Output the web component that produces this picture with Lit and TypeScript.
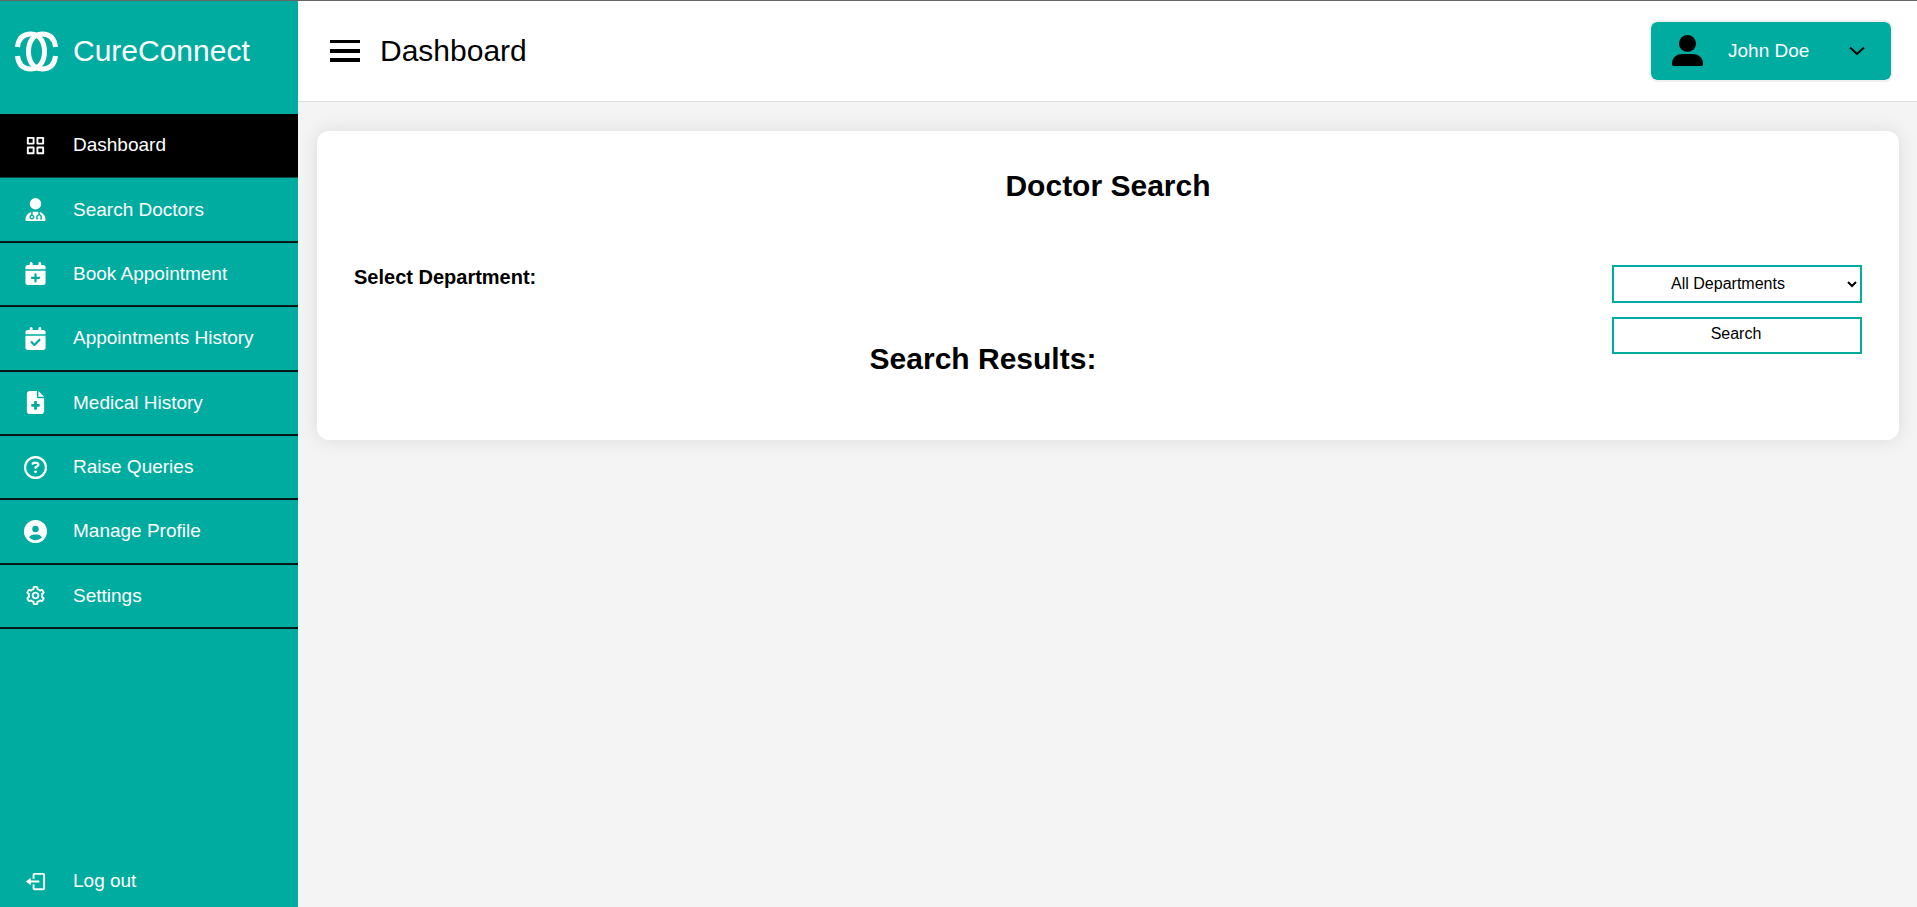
import { LitElement, html, css, svg } from "lit";
import { customElement, property, state } from "lit/decorators.js";
import { classMap } from "lit/directives/class-map.js";

const CALENDAR =
  "M96 32V64H48C21.5 64 0 85.5 0 112v48H448V112c0-26.5-21.5-48-48-48H352V32c0-17.7-14.3-32-32-32s-32 14.3-32 32V64H160V32c0-17.7-14.3-32-32-32S96 14.3 96 32z";

const ICONS: Record<string, { box: string; paths: string[] }> = {
  grid: {
    box: "0 0 24 24",
    paths: [
      "M10 3H4a1 1 0 0 0-1 1v6a1 1 0 0 0 1 1h6a1 1 0 0 0 1-1V4a1 1 0 0 0-1-1zM9 9H5V5h4v4zm11-6h-6a1 1 0 0 0-1 1v6a1 1 0 0 0 1 1h6a1 1 0 0 0 1-1V4a1 1 0 0 0-1-1zm-1 6h-4V5h4v4zm-9 4H4a1 1 0 0 0-1 1v6a1 1 0 0 0 1 1h6a1 1 0 0 0 1-1v-6a1 1 0 0 0-1-1zm-1 6H5v-4h4v4zm11-6h-6a1 1 0 0 0-1 1v6a1 1 0 0 0 1 1h6a1 1 0 0 0 1-1v-6a1 1 0 0 0-1-1zm-1 6h-4v-4h4v4z",
    ],
  },
  doctor: {
    box: "0 0 448 512",
    paths: [
      "M224 256a128 128 0 1 0 0-256 128 128 0 1 0 0 256zm-96 55.2C54 332.9 0 401.3 0 482.3C0 498.7 13.3 512 29.7 512H418.3c16.4 0 29.7-13.3 29.7-29.7c0-81-54-149.4-128-171.1V362c27.6 7.1 48 32.2 48 62v40c0 8.8-7.2 16-16 16H336c-8.8 0-16-7.2-16-16s7.2-16 16-16V424c0-17.7-14.3-32-32-32s-32 14.3-32 32v24c8.8 0 16 7.2 16 16s-7.2 16-16 16H256c-8.8 0-16-7.2-16-16V424c0-29.8 20.4-54.9 48-62V304.9c-6-.6-12.1-.9-18.3-.9H178.3c-6.2 0-12.3 .3-18.3 .9v65.4c23.1 6.9 40 28.3 40 53.7c0 30.9-25.1 56-56 56s-56-25.1-56-56c0-25.4 16.9-46.8 40-53.7V311.2zM144 448a24 24 0 1 0 0-48 24 24 0 1 0 0 48z",
    ],
  },
  calendarPlus: {
    box: "0 0 448 512",
    paths: [
      CALENDAR,
      "M448 192H0V464c0 26.5 21.5 48 48 48H400c26.5 0 48-21.5 48-48V192zM224 248c13.3 0 24 10.7 24 24v56h56c13.3 0 24 10.7 24 24s-10.7 24-24 24H248v56c0 13.3-10.7 24-24 24s-24-10.7-24-24V376H144c-13.3 0-24-10.7-24-24s10.7-24 24-24h56V272c0-13.3 10.7-24 24-24z",
    ],
  },
  calendarCheck: {
    box: "0 0 448 512",
    paths: [
      CALENDAR,
      "M448 192H0V464c0 26.5 21.5 48 48 48H400c26.5 0 48-21.5 48-48V192zM329 305L217 417c-9.4 9.4-24.6 9.4-33.9 0l-64-64c-9.4-9.4-9.4-24.6 0-33.9s24.6-9.4 33.9 0l47 47 95-95c9.4-9.4 24.6-9.4 33.9 0s9.4 24.6 0 33.9z",
    ],
  },
  fileMedical: {
    box: "0 0 384 512",
    paths: [
      "M64 0C28.7 0 0 28.7 0 64V448c0 35.3 28.7 64 64 64H320c35.3 0 64-28.7 64-64V160H256c-17.7 0-32-14.3-32-32V0H64zM256 0V128H384L256 0zM160 240c0-8.8 7.2-16 16-16h32c8.8 0 16 7.2 16 16v48h48c8.8 0 16 7.2 16 16v32c0 8.8-7.2 16-16 16H224v48c0 8.8-7.2 16-16 16H176c-8.8 0-16-7.2-16-16V352H112c-8.8 0-16-7.2-16-16V304c0-8.8 7.2-16 16-16h48V240z",
    ],
  },
  question: {
    box: "0 0 512 512",
    paths: [
      "M464 256A208 208 0 1 0 48 256a208 208 0 1 0 416 0zM0 256a256 256 0 1 1 512 0A256 256 0 1 1 0 256zm169.8-90.7c7.9-22.3 29.1-37.3 52.8-37.3h58.3c34.9 0 63.1 28.3 63.1 63.1c0 22.6-12.1 43.5-31.7 54.8L280 264.4c-.2 13-10.9 23.6-24 23.6c-13.3 0-24-10.7-24-24V250.5c0-8.6 4.6-16.5 12.1-20.8l44.3-25.4c4.7-2.7 7.6-7.7 7.6-13.1c0-8.4-6.8-15.1-15.1-15.1H222.6c-3.4 0-6.4 2.1-7.5 5.3l-.4 1.2c-4.4 12.5-18.2 19-30.6 14.6s-19-18.2-14.6-30.6l.4-1.2zM224 352a32 32 0 1 1 64 0 32 32 0 1 1 -64 0z",
    ],
  },
  userCircle: {
    box: "0 0 512 512",
    paths: [
      "M399 384.2C376.9 345.8 335.4 320 288 320H224c-47.4 0-88.9 25.8-111 64.2c35.2 39.2 86.2 63.8 143 63.8s107.8-24.7 143-63.8zM0 256a256 256 0 1 1 512 0A256 256 0 1 1 0 256zm256 16a72 72 0 1 0 0-144 72 72 0 1 0 0 144z",
    ],
  },
  cog: {
    box: "0 0 24 24",
    paths: [
      "M12 16c2.206 0 4-1.794 4-4s-1.794-4-4-4-4 1.794-4 4 1.794 4 4 4zm0-6c1.084 0 2 .916 2 2s-.916 2-2 2-2-.916-2-2 .916-2 2-2z",
      "m2.845 16.136 1 1.73c.531.917 1.809 1.261 2.73.73l.529-.306A8.1 8.1 0 0 0 9 19.402V20c0 1.103.897 2 2 2h2c1.103 0 2-.897 2-2v-.598a8.132 8.132 0 0 0 1.896-1.111l.529.306c.923.53 2.198.188 2.731-.731l.999-1.729a2.001 2.001 0 0 0-.731-2.732l-.505-.292a7.718 7.718 0 0 0 0-2.224l.505-.292a2.002 2.002 0 0 0 .731-2.732l-.999-1.729c-.531-.92-1.808-1.265-2.731-.732l-.529.306A8.1 8.1 0 0 0 15 4.598V4c0-1.103-.897-2-2-2h-2c-1.103 0-2 .897-2 2v.598a8.132 8.132 0 0 0-1.896 1.111l-.529-.306c-.924-.531-2.2-.187-2.731.732l-.999 1.729a2.001 2.001 0 0 0 .731 2.732l.505.292a7.683 7.683 0 0 0 0 2.223l-.505.292a2.003 2.003 0 0 0-.731 2.733zm3.326-2.758A5.703 5.703 0 0 1 6 12c0-.462.058-.926.17-1.378a.999.999 0 0 0-.47-1.108l-1.123-.65.998-1.729 1.145.662a.997.997 0 0 0 1.188-.142 6.071 6.071 0 0 1 2.384-1.399A1 1 0 0 0 11 5.3V4h2v1.3a1 1 0 0 0 .708.956 6.083 6.083 0 0 1 2.384 1.399.999.999 0 0 0 1.188.142l1.144-.661 1 1.729-1.124.649a1 1 0 0 0-.47 1.108c.112.452.17.916.17 1.378 0 .461-.058.925-.171 1.378a1 1 0 0 0 .471 1.108l1.123.649-.998 1.729-1.145-.661a.996.996 0 0 0-1.188.142 6.071 6.071 0 0 1-2.384 1.399A1 1 0 0 0 13 18.7l.002 1.3H11v-1.3a1 1 0 0 0-.708-.956 6.083 6.083 0 0 1-2.384-1.399.992.992 0 0 0-1.188-.141l-1.144.662-1-1.729 1.124-.651a1 1 0 0 0 .471-1.108z",
    ],
  },
  logout: {
    box: "0 0 24 24",
    paths: [
      "M16 13v-2H7V8l-5 4 5 4v-3z",
      "M20 3h-9c-1.103 0-2 .897-2 2v4h2V5h9v14h-9v-4H9v4c0 1.103.897 2 2 2h9c1.103 0 2-.897 2-2V5c0-1.103-.897-2-2-2z",
    ],
  },
};

const NAV = [
  { icon: "grid", label: "Dashboard" },
  { icon: "doctor", label: "Search Doctors" },
  { icon: "calendarPlus", label: "Book Appointment" },
  { icon: "calendarCheck", label: "Appointments History" },
  { icon: "fileMedical", label: "Medical History" },
  { icon: "question", label: "Raise Queries" },
  { icon: "userCircle", label: "Manage Profile" },
  { icon: "cog", label: "Settings" },
];

@customElement("nav-icon")
class NavIcon extends LitElement {
  @property() name = "grid";

  static styles = css`
    :host {
      display: flex;
      width: 23px;
      height: 23px;
    }
    .glyph {
      width: 23px;
      height: 23px;
      fill: currentColor;
    }
  `;

  render() {
    const icon = ICONS[this.name];
    return html`<svg class="glyph" viewBox=${icon.box} aria-hidden="true">
      ${icon.paths.map((d) => svg`<path d=${d}></path>`)}
    </svg>`;
  }
}

@customElement("side-bar")
class SideBar extends LitElement {
  @state() private active = "Dashboard";

  static styles = css`
    :host {
      display: flex;
      flex-direction: column;
      background: #00aca0;
      color: #fff;
      font-size: 19px;
    }
    .brand {
      display: flex;
      align-items: center;
      gap: 14px;
      height: 100px;
      padding-left: 14px;
      margin-bottom: 13px;
      font-size: 30px;
    }
    .logo {
      width: 45px;
      height: 41px;
      fill: none;
      stroke: #fff;
      stroke-width: 5;
    }
    .list {
      display: grid;
      grid-auto-rows: 1fr;
      height: 515px;
      margin: 0;
      padding: 0;
      list-style: none;
    }
    .row {
      display: flex;
    }
    .link {
      display: flex;
      flex: 1;
      align-items: center;
      gap: 26px;
      padding: 0 0 2px 24px;
      color: inherit;
      text-decoration: none;
    }
    .list .link {
      box-shadow: inset 0 -1px rgba(0, 0, 0, 0.5), inset 0 -2px #04201e;
    }
    .list .link.active {
      background: #000;
      box-shadow: inset 0 -1px #0c4c48;
    }
    .link.exit {
      flex: none;
      height: 48px;
      margin-top: auto;
    }
  `;

  render() {
    return html`
      <div class="brand">
        <svg class="logo" viewBox="0 0 45 41" aria-hidden="true">
          <path d="M41.500 16C40.500 7 36 3 28 3C18.500 3 14.500 12 14.500 20.500S18.500 38 28 38C36 38 40.500 34 41.500 25"></path>
          <path d="M3.500 16C4.500 7 9 3 17 3C26.500 3 30.500 12 30.500 20.500S26.500 38 17 38C9 38 4.500 34 3.500 25"></path>
        </svg>
        <span>CureConnect</span>
      </div>
      <ul class="list">
        ${NAV.map(
          (item) => html`<li class="row">
            <a
              href="#"
              class=${classMap({ link: true, active: item.label === this.active })}
              @click=${() => (this.active = item.label)}
            >
              <nav-icon name=${item.icon}></nav-icon>
              <span>${item.label}</span>
            </a>
          </li>`
        )}
      </ul>
      <a class="link exit" href="#">
        <nav-icon name="logout"></nav-icon>
        <span>Log out</span>
      </a>
    `;
  }
}

@customElement("top-bar")
class TopBar extends LitElement {
  static styles = css`
    :host {
      display: flex;
      align-items: center;
      justify-content: space-between;
      height: 100px;
      padding: 0 24px 0 32px;
      background: #fff;
      border-bottom: 1px solid #ddd;
    }
    button {
      font-family: inherit;
      cursor: pointer;
    }
    .heading {
      display: flex;
      align-items: center;
      gap: 20px;
    }
    .title {
      margin: 0;
      font-size: 30px;
      font-weight: 400;
    }
    .burger {
      display: flex;
      padding: 0;
      border: 0;
      background: none;
    }
    .bars {
      width: 30px;
      height: 22px;
    }
    .profile {
      display: flex;
      align-items: center;
      box-sizing: border-box;
      width: 244px;
      height: 62px;
      padding: 0 25px 0 21px;
      border: 2px solid #f0f0f0;
      border-radius: 8px;
      background: #00aca0;
      background-clip: padding-box;
      color: #fff;
      font-size: 19px;
    }
    .avatar {
      width: 31px;
      height: 31px;
      margin-right: 25px;
      padding-bottom: 2px;
      fill: #000;
    }
    .chevron {
      width: 18px;
      height: 10px;
      margin-left: auto;
      fill: none;
      stroke: #000;
      stroke-width: 2;
    }
  `;

  render() {
    return html`
      <div class="heading">
        <button class="burger" aria-label="Toggle menu">
          <svg class="bars" viewBox="0 0 30 22" aria-hidden="true">
            <path d="M0 0h30v3H0zM0 9h30v4H0zM0 18h30v4H0z"></path>
          </svg>
        </button>
        <h1 class="title">Dashboard</h1>
      </div>
      <button class="profile">
        <svg class="avatar" viewBox="0 0 31 31" aria-hidden="true">
          <circle cx="15.5" cy="8.5" r="8.5"></circle>
          <path d="M0 29C0 22 5 19 11 19h9c6 0 11 3 11 10 0 1.500-.8 2-2 2H2c-1.200 0-2-.5-2-2z"></path>
        </svg>
        <span>John Doe</span>
        <svg class="chevron" viewBox="0 0 18 10" aria-hidden="true">
          <path d="M2 1.500l7 6.500 7-6.500"></path>
        </svg>
      </button>
    `;
  }
}

@customElement("doctor-search")
class DoctorSearch extends LitElement {
  static styles = css`
    :host {
      display: block;
      padding: 37px;
      border-radius: 12px;
      background: #fff;
      box-shadow: 0 0 20px rgba(0, 0, 0, 0.1);
    }
    .title {
      margin: 0 0 61px;
      font-size: 30px;
      line-height: 36px;
      text-align: center;
    }
    .form {
      display: grid;
      grid-template-columns: 1fr 250px;
      min-height: 138px;
    }
    .label {
      display: block;
      margin-bottom: 52px;
      font-size: 20px;
      font-weight: 700;
      line-height: 24px;
    }
    .results {
      margin: 0;
      font-size: 30px;
      line-height: 36px;
      text-align: center;
    }
    .controls {
      display: flex;
      flex-direction: column;
      gap: 14px;
    }
    .field {
      box-sizing: border-box;
      width: 100%;
      height: 38px;
      margin: 0;
      padding: 0 6px 2px 0;
      border: 2px solid #00aca0;
      border-radius: 0;
      background: #fff;
      color: #000;
      font-family: inherit;
      font-size: 16px;
      text-align: center;
    }
    .field.submit {
      height: 37px;
      padding: 0 2px 3px 0;
    }
  `;

  render() {
    return html`
      <h2 class="title">Doctor Search</h2>
      <div class="form">
        <div>
          <label class="label" for="department">Select Department:</label>
          <h2 class="results">Search Results:</h2>
        </div>
        <div class="controls">
          <select class="field" id="department">
            <option>All Departments</option>
          </select>
          <button class="field submit">Search</button>
        </div>
      </div>
    `;
  }
}

@customElement("app-root")
class AppRoot extends LitElement {
  static styles = css`
    :host {
      display: grid;
      grid-template-columns: 298px 1fr;
      box-sizing: border-box;
      min-height: 100vh;
      border-top: 1px solid #666;
      background: #f4f4f4;
      color: #000;
      font-family: "Liberation Sans", Arial, sans-serif;
    }
    .content {
      padding: 29px 18px 29px 19px;
    }
  `;

  render() {
    return html`
      <side-bar></side-bar>
      <main>
        <top-bar></top-bar>
        <div class="content">
          <doctor-search></doctor-search>
        </div>
      </main>
    `;
  }
}
